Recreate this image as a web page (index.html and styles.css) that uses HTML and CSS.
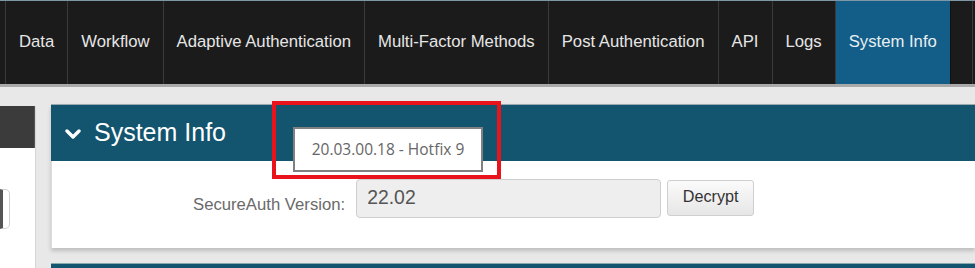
FILE: index.html
```html
<!DOCTYPE html>
<html>
<head>
<meta charset="utf-8">
<link rel="stylesheet" href="styles.css">
</head>
<body>
<nav class="nav">
  <div class="nav-lead"></div>
  <a class="nav-item">Data</a>
  <a class="nav-item">Workflow</a>
  <a class="nav-item">Adaptive Authentication</a>
  <a class="nav-item">Multi-Factor Methods</a>
  <a class="nav-item">Post Authentication</a>
  <a class="nav-item">API</a>
  <a class="nav-item">Logs</a>
  <a class="nav-item active">System Info</a>
  <div class="nav-rest"></div>
</nav>
<div class="content">
  <aside class="sidebar">
    <div class="side-head"></div>
    <div class="side-box"></div>
  </aside>
  <main class="main">
    <section class="panel">
      <header class="panel-head">
        <svg class="chev" width="16" height="12" viewBox="0 0 16 12"><path d="M2 3 L8 9 L14 3" fill="none" stroke="#fff" stroke-width="3.4" stroke-linecap="round" stroke-linejoin="round"/></svg>
        <h2 class="panel-title">System Info</h2>
      </header>
      <div class="panel-body">
        <label class="field-label">SecureAuth Version:</label>
        <div class="field-input">22.02</div>
        <button class="btn">Decrypt</button>
      </div>
    </section>
    <section class="panel next">
      <header class="panel-head small"></header>
    </section>
  </main>
  <div class="callout"></div>
  <div class="tooltip">20.03.00.18 - Hotfix 9</div>
</div>
</body>
</html>
```
FILE: styles.css
```css
* { box-sizing: border-box; }
html, body { margin: 0; padding: 0; }
body {
  width: 975px;
  height: 268px;
  overflow: hidden;
  background: #e8e8e8;
  font-family: "Liberation Sans", Arial, sans-serif;
}
.nav {
  display: flex;
  height: 87px;
  background: #1b1b1b;
  border-top: 1px solid #7d97a6;
  border-bottom: 3px solid #a9a9a9;
}
.nav-lead { width: 6px; border-right: 1px solid #3a3a3a; }
.nav-item {
  display: flex;
  align-items: center;
  padding: 0 13px 1px 13px;
  color: #e6e6e6;
  font-size: 16.7px;
  border-right: 1px solid #3a3a3a;
  white-space: nowrap;
}
.nav-item.active { background: #135e88; color: #e8eef3; border-right: 1px solid #111; }
.nav-rest { flex: 1; border-right: 1px solid #3a3a3a; margin-right: 2px; }

.content {
  position: relative;
  display: flex;
  gap: 15px;
  padding-top: 17px;
}
.sidebar {
  width: 36px;
  height: 170px;
  margin-top: 2px;
  background: #fff;
  border-right: 1px solid #d6d6d6;
  display: flex;
  flex-direction: column;
}
.side-head { height: 42px; background: #3b3b3b; border-right: 1px solid #555; }
.side-box {
  margin-top: 41px;
  width: 10px;
  height: 40px;
  border: 1px solid #d0d0d0;
  border-left: 3px solid #555;
  border-radius: 0 5px 5px 0;
}
.main { flex: 1; display: flex; flex-direction: column; gap: 15px; }
.panel { background: #fff; box-shadow: 0 3px 4px rgba(0,0,0,0.18); }
.panel-head {
  height: 57px;
  background: #13546f;
  border-top: 1px solid #9aa9b0;
  display: flex;
  align-items: center;
  padding-left: 14px;
}
.chev { margin-right: 13px; margin-top: 2px; }
.panel-title {
  margin: 0;
  color: #fff;
  font-weight: normal;
  font-size: 25px;
  line-height: 1;
  padding-bottom: 2px;
}
.panel-body {
  height: 87px;
  border-left: 1px solid #dcdcdc;
  display: flex;
  align-items: center;
  padding-left: 141px;
  padding-bottom: 13px;
}
.field-label {
  color: #6a6a6a;
  font-size: 16.7px;
  margin-top: 14px;
  margin-right: 11px;
}
.field-input {
  width: 305px;
  height: 39px;
  background: #eeeeee;
  border: 1px solid #cfcfcf;
  border-radius: 4px;
  color: #555;
  font-size: 19.4px;
  padding: 6px 0 0 10px;
}
.btn {
  margin-left: 6px;
  width: 87px;
  height: 36px;
  background: linear-gradient(#fbfbfb, #e6e6e6);
  border: 1px solid #cfcfcf;
  border-radius: 3px;
  font-family: "Liberation Sans", Arial, sans-serif;
  font-size: 16.2px;
  color: #333;
  padding: 0 0 4px 0;
}
.panel.next { box-shadow: none; }
.panel-head.small { height: 10px; border-top: 1px solid #8aa; }

.callout {
  position: absolute;
  left: 272px;
  top: 14px;
  width: 229px;
  height: 78px;
  border: 4px solid #e8131b;
}
.tooltip {
  position: absolute;
  left: 293px;
  top: 40px;
  width: 190px;
  height: 45px;
  background: #fff;
  border: 2px solid #808080;
  color: #666;
  font-family: "Open Sans", sans-serif;
  font-size: 15.5px;
  display: flex;
  align-items: center;
  justify-content: center;
  padding-bottom: 1px;
}
```
